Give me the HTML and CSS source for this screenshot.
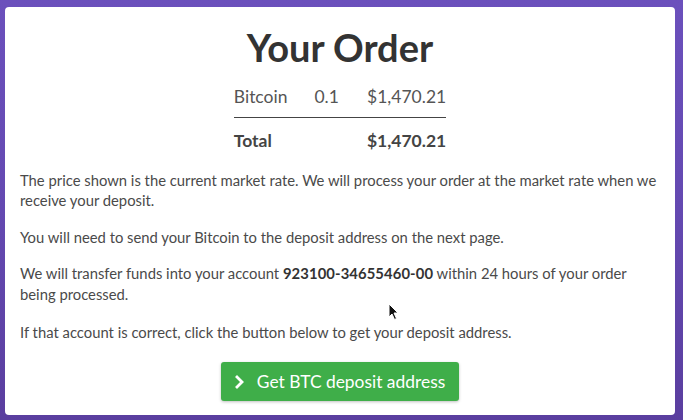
FILE: index.html
```html
<!DOCTYPE html>
<html>
<head>
<meta charset="utf-8">
<link rel="stylesheet" href="styles.css">
</head>
<body>
<div class="card">
  <h1 class="title">Your Order</h1>
  <table class="order">
    <tr class="item"><td>Bitcoin</td><td class="qty">0.1</td><td class="amt">$1,470.21</td></tr>
    <tr class="total"><td>Total</td><td></td><td class="amt">$1,470.21</td></tr>
  </table>
  <div class="copy">
    <p class="lead">The price shown is the current market rate. We will process your order at the market rate when we receive your deposit.</p>
    <p>You will need to send your Bitcoin to the deposit address on the next page.</p>
    <p class="account">We will transfer funds into your account <strong>923100-34655460-00</strong> within 24 hours of your order<br>being processed.</p>
    <p>If that account is correct, click the button below to get your deposit address.</p>
  </div>
  <div class="actions">
    <button class="btn"><svg class="chev" viewBox="0 0 10 14" width="10" height="14"><path d="M2 2 L7 7 L2 12" fill="none" stroke="#fff" stroke-width="2.8" stroke-linecap="square"/></svg>Get BTC deposit address</button>
  </div>
  <svg class="cursor" viewBox="0 0 12 18" width="12" height="18"><path d="M1 1 L1 14 L4 11 L6.5 16.5 L8.5 15.5 L6 10 L10 10 Z" fill="#111" stroke="#fff" stroke-width="1"/></svg>
</div>
</body>
</html>
```
FILE: styles.css
```css
html, body { margin: 0; padding: 0; }
body {
  width: 683px;
  height: 420px;
  background: linear-gradient(180deg, #6b50bc 0%, #6449b1 50%, #5a3e9f 100%);
  font-family: Lato, "Open Sans", sans-serif;
  color: #4a4a4a;
  padding: 7px 8px 5px 5px;
  box-sizing: border-box;
  overflow: hidden;
}
.card {
  position: relative;
  background: #fff;
  border-radius: 4px;
  height: 408px;
  box-sizing: border-box;
  padding: 18px 15px 0 15px;
}
.title {
  margin: 0;
  text-align: center;
  font-size: 38px;
  font-weight: 700;
  color: #333;
  line-height: 44px;
}
.order {
  margin: 16px auto 19px;
  border-collapse: collapse;
  font-size: 17.5px;
  color: #555;
}
.order td { padding: 0; }
.order .item td { padding-bottom: 10px; border-bottom: 1px solid #444; height: 22px; }
.order .total td { padding-top: 11px; font-weight: 700; color: #444; height: 22px; }
.order .qty { padding-left: 27px; padding-right: 28px; }
.order .amt { text-align: right; }
p {
  margin: 0 0 15px;
  font-size: 14.8px;
  line-height: 21px;
}
p.lead { line-height: 20px; margin-bottom: 17px; }
p.account { margin-bottom: 17px; }
p strong { color: #333; letter-spacing: 0.1px; }
.actions { display: flex; justify-content: center; margin-top: 19px; }
.btn {
  display: flex;
  align-items: center;
  gap: 12px;
  background: #3fae49;
  color: #fff;
  border: none;
  border-radius: 3px;
  font-family: Lato, sans-serif;
  font-size: 17.4px;
  height: 39px;
  padding: 0 14px 0 14px;
  box-shadow: 0 1px 3px rgba(0,0,0,0.25);
}
.cursor { position: absolute; left: 383px; top: 296px; }
```
